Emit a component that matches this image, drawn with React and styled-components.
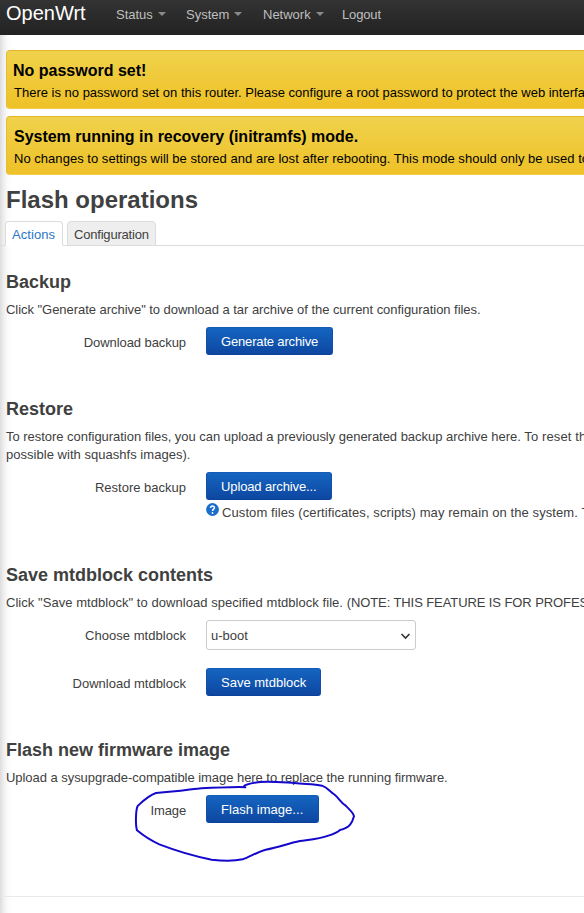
import React from "react";
import styled, { createGlobalStyle } from "styled-components";

const GlobalStyle = createGlobalStyle`
  * { box-sizing: border-box; }
  html, body { margin: 0; padding: 0; background: #fff; overflow: hidden; }
  body {
    font: 13px/18px "Liberation Sans", Arial, sans-serif;
    color: #404040;
  }
`;

const Page = styled.div`
  width: 100%;
  height: 913px;
  overflow: hidden;
  display: flex;
  flex-direction: column;
`;

const Header = styled.header`
  height: 35px;
  flex: none;
  display: flex;
  align-items: flex-start;
  padding-left: 6px;
  background: linear-gradient(#333, #222);
  white-space: nowrap;
`;

const Brand = styled.a`
  width: 110px;
  padding-top: 2px;
  font-size: 20px;
  line-height: 22px;
  color: #fff;
`;

const Nav = styled.nav`
  display: flex;
`;

const NavItem = styled.a`
  width: ${(p) => p.$width}px;
  display: flex;
  align-items: center;
  padding-top: 5px;
  height: 24px;
  color: #bfbfbf;
  letter-spacing: ${(p) => p.$spacing || 0}px;
`;

const Caret = styled.i`
  margin: 0 0 1px 5px;
  border: 4px solid transparent;
  border-top-color: #8a8a8a;
  border-bottom: 0;
`;

const Main = styled.main`
  flex: 1;
  background: linear-gradient(90deg, #dcdcdc 0, #ececec 3px, #f9f9f9 7px, #fff 11px);
  padding-top: 15px;
  white-space: nowrap;
`;

const Alert = styled.section`
  width: 640px;
  height: 59px;
  margin: 0 0 7px 6px;
  padding: 9px 7px;
  color: #000;
  background: linear-gradient(#f0d24c, #eec127);
  border: 1px solid #e6be34;
  border-color: #e6b52c #e6bc30 #f0cd50;
  border-radius: 4px;
`;

const AlertTitle = styled.h4`
  margin: 0 0 2px ${(p) => p.$shift || 0}px;
  font-size: 16px;
  line-height: 22px;
  letter-spacing: ${(p) => p.$spacing || 0}px;
`;

const Text = styled.p`
  margin: 0;
  white-space: pre;
  letter-spacing: ${(p) => p.$spacing || 0}px;
`;

const Spaced = styled.span`
  letter-spacing: ${(p) => p.$spacing}px;
`;

const Title = styled.h2`
  margin: 0 0 0 6px;
  height: 39px;
  font-size: 24px;
  line-height: 36px;
`;

const Tabs = styled.div`
  display: flex;
  align-items: flex-end;
  gap: 4px;
  height: 25px;
  padding-left: 5px;
  box-shadow: inset 0 -1px #dcdcdc;
`;

const Tab = styled.a`
  width: ${(p) => p.$width}px;
  height: 25px;
  padding-left: 6px;
  line-height: 25px;
  border: 1px solid #dcdcdc;
  border-bottom-color: ${(p) => (p.$active ? "#fff" : "#dcdcdc")};
  border-radius: 4px 4px 0 0;
  background: ${(p) => (p.$active ? "#fff" : "#eee")};
  color: ${(p) => (p.$active ? "#2a76c8" : "#404040")};
  letter-spacing: ${(p) => p.$spacing || 0}px;
`;

const Sections = styled.div`
  padding-top: 18px;
`;

const Section = styled.section`
  height: ${(p) => p.$height}px;
  padding-left: 6px;
`;

const SectionTitle = styled.h3`
  margin: 0 0 1px;
  font-size: 18px;
  line-height: 36px;
`;

const Row = styled.div`
  display: flex;
  margin-top: ${(p) => p.$top || 8}px;
`;

const Label = styled.label`
  flex: none;
  width: 180px;
  margin-right: 20px;
  padding-top: 7px;
  text-align: right;
  letter-spacing: ${(p) => p.$spacing || 0}px;
`;

const Field = styled.div`
  display: flex;
  flex-direction: column;
  align-items: flex-start;
`;

const Button = styled.button`
  width: ${(p) => p.$width}px;
  height: 28px;
  padding: 1px 0 0 14px;
  border: 1px solid #1458b4;
  border-color: #145cb5 #1250a8 #0b419a;
  border-radius: 3px;
  background: linear-gradient(#1565c0, #0d47a1);
  color: #fff;
  font: inherit;
  text-align: left;
  letter-spacing: ${(p) => p.$spacing || 0}px;
`;

const Help = styled.div`
  display: flex;
  gap: 3px;
  margin-top: 4px;
`;

const HelpIcon = styled.svg`
  width: 13px;
  height: 13px;
  margin-top: -1px;
`;

const Select = styled.div`
  width: 210px;
  height: 30px;
  display: flex;
  align-items: center;
  justify-content: space-between;
  padding: 1px 4px 0;
  border: 1px solid #ccc;
  border-radius: 3px;
  background: #fff;
`;

const Chevron = styled.svg`
  width: 11px;
  height: 8px;
`;

const Footer = styled.footer`
  margin-left: 3px;
  border-top: 1px solid #eaeaea;
`;

const Marker = styled.svg`
  position: absolute;
  left: 120px;
  top: 735px;
  width: 240px;
  height: 178px;
  pointer-events: none;
`;

export default function App() {
  return (
    <Page>
      <GlobalStyle />
      <Header>
        <Brand>OpenWrt</Brand>
        <Nav>
          <NavItem $width={70}>Status<Caret /></NavItem>
          <NavItem $width={77}>System<Caret /></NavItem>
          <NavItem $width={79}>Network<Caret /></NavItem>
          <NavItem $spacing={-0.15}>Logout</NavItem>
        </Nav>
      </Header>
      <Main>
        <Alert>
          <AlertTitle $shift={-1}>No password set!</AlertTitle>
          <Text>There is no password set on this router. Please configure a root password to protect the web interface.</Text>
        </Alert>
        <Alert>
          <AlertTitle $spacing={-0.02}>System running in recovery (initramfs) mode.</AlertTitle>
          <Text $spacing={0.03}>No changes to settings will be stored and are lost after rebooting. This mode should only be used to</Text>
        </Alert>
        <Title>Flash operations</Title>
        <Tabs>
          <Tab $active $width={58} $spacing={0.08}>Actions</Tab>
          <Tab $width={89} $spacing={-0.2}>Configuration</Tab>
        </Tabs>
        <Sections>
          <Section $height={127}>
            <SectionTitle>Backup</SectionTitle>
            <Text $spacing={-0.042}>Click "Generate archive" to download a tar archive of the current configuration files.</Text>
            <Row>
              <Label $spacing={-0.07}>Download backup</Label>
              <Button $width={127} $spacing={-0.16}>Generate archive</Button>
            </Row>
          </Section>
          <Section $height={166}>
            <SectionTitle>Restore</SectionTitle>
            <Text>
              <Spaced $spacing={-0.03}>To restore configuration files, you can upload a previously generated backup archive here. </Spaced>
              <Spaced $spacing={0.12}>To reset the</Spaced>
            </Text>
            <Text $spacing={0.03}>possible with squashfs images).</Text>
            <Row>
              <Label>Restore backup</Label>
              <Field>
                <Button $width={126} $spacing={-0.12}>Upload archive...</Button>
                <Help>
                  <HelpIcon viewBox="0 0 13 13">
                    <circle cx="6.5" cy="6.5" r="6.4" fill="#1b6ecb" />
                    <path d="M4.6 4.9C4.7 2.4 8.5 2.5 8.4 4.8C8.3 6.2 6.5 6.1 6.5 8" fill="none" stroke="#fff" strokeWidth="1.5" />
                    <circle cx="6.5" cy="10" r=".9" fill="#fff" />
                  </HelpIcon>
                  <Text $spacing={0.09}>Custom files (certificates, scripts) may remain on the system. To</Text>
                </Help>
              </Field>
            </Row>
          </Section>
          <Section $height={175}>
            <SectionTitle>Save mtdblock contents</SectionTitle>
            <Text>
              <Spaced $spacing={0.045}>Click "Save mtdblock" to download specified mtdblock file. </Spaced>
              <Spaced $spacing={-0.09}>(NOTE: THIS FEATURE IS FOR PROFESSIONALS</Spaced>
            </Text>
            <Row>
              <Label $spacing={0.03}>Choose mtdblock</Label>
              <Select>
                u-boot
                <Chevron viewBox="0 0 11 8">
                  <path d="M1.5 2L5.5 6L9.5 2" fill="none" stroke="#333" strokeWidth="1.6" />
                </Chevron>
              </Select>
            </Row>
            <Row $top={18}>
              <Label>Download mtdblock</Label>
              <Button $width={115}>Save mtdblock</Button>
            </Row>
          </Section>
          <Section $height={164}>
            <SectionTitle>Flash new firmware image</SectionTitle>
            <Text $spacing={-0.047}>Upload a sysupgrade-compatible image here to replace the running firmware.</Text>
            <Row>
              <Label $spacing={-0.15}>Image</Label>
              <Button $width={113} $spacing={0.05}>Flash image...</Button>
            </Row>
          </Section>
        </Sections>
        <Footer />
      </Main>
      <Marker viewBox="0 0 720 534">
        <path
          d="M376 157L358 156C310 157 260 158 222 162C185 167 160 171 108 174C86 181 72 195 53 213C47 225 46 270 51 286C75 306 95 318 118 328C170 348 220 363 275 374C300 377 340 379 368 373C390 365 410 352 437 344C480 337 500 326 540 318C580 313 600 312 625 302C645 296 655 290 660 285C690 279 697 262 702 244C700 232 688 224 677 212C662 202 657 190 645 180C630 170 622 158 606 152C580 146 550 148 524 144C490 142 450 138 420 141C400 144 376 147 372 154"
          fill="none"
          stroke="#1408cc"
          strokeWidth="6"
          strokeLinejoin="round"
          strokeLinecap="round"
        />
      </Marker>
    </Page>
  );
}
